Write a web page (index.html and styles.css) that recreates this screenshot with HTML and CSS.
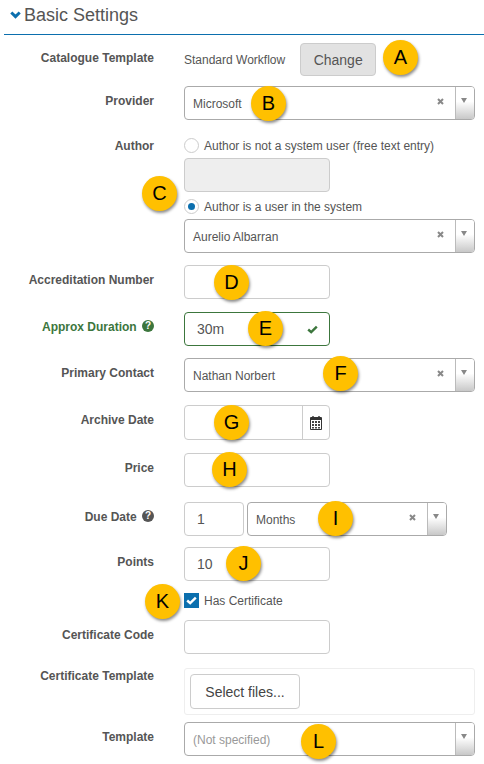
FILE: index.html
```html
<!DOCTYPE html><html><head><meta charset="utf-8">
<title>Basic Settings</title>
<link rel="stylesheet" href="styles.css">
</head><body>

<h2 class="section-title">
	<svg class="chevron" width="11" height="8" viewBox="0 0 11 8"><path d="M1.3 1.5 L5.5 5.6 L9.7 1.5" fill="none" stroke="#0b6fae" stroke-width="3"/></svg>
	Basic Settings
</h2>

<form class="settings">
	<div class="row row-first">
		<label>Catalogue Template</label>
		<div class="field inline-text">
			<span class="plain">Standard Workflow</span>
			<button type="button" class="btn-change">Change</button>
		</div>
	</div>

	<div class="row gap10">
		<label>Provider</label>
		<div class="combo"><span class="combo-value">Microsoft</span><svg class="combo-clear" width="7" height="7" viewBox="0 0 7 7"><path d="M1 1 L6 6 M6 1 L1 6" stroke="#888" stroke-width="2"/></svg><span class="combo-arrow"></span></div>
	</div>

	<div class="row gap18 row-author">
		<label>Author</label>
		<div class="field stack">
			<div class="choice"><span class="radio"></span>Author is not a system user (free text entry)</div>
			<div class="input input-disabled"></div>
			<div class="choice choice-second"><span class="radio radio-on"></span>Author is a user in the system</div>
			<div class="combo"><span class="combo-value">Aurelio Albarran</span><svg class="combo-clear" width="7" height="7" viewBox="0 0 7 7"><path d="M1 1 L6 6 M6 1 L1 6" stroke="#888" stroke-width="2"/></svg><span class="combo-arrow"></span></div>
		</div>
	</div>

	<div class="row gap12">
		<label>Accreditation Number</label>
		<div class="input"></div>
	</div>

	<div class="row gap13">
		<label class="label-ok">Approx Duration <span class="help help-ok">?</span></label>
		<div class="input input-ok">30m
			<svg class="tick" width="11" height="9" viewBox="0 0 11 9"><path d="M1.2 4.5 L4.2 7.2 L9.8 1.6" fill="none" stroke="#3c763d" stroke-width="2.4"/></svg>
		</div>
	</div>

	<div class="row gap12">
		<label>Primary Contact</label>
		<div class="combo"><span class="combo-value">Nathan Norbert</span><svg class="combo-clear" width="7" height="7" viewBox="0 0 7 7"><path d="M1 1 L6 6 M6 1 L1 6" stroke="#888" stroke-width="2"/></svg><span class="combo-arrow"></span></div>
	</div>

	<div class="row gap13">
		<label>Archive Date</label>
		<div class="input input-date">
			<span class="date-btn">
				<svg width="12" height="14" viewBox="0 0 12 14"><path d="M0.5 1.5 H11.5 V13.5 H0.5 Z" fill="#fff" stroke="#333"/><path d="M0 2 H12 V4 H0 Z" fill="#333"/><path d="M3 0 V2 M9 0 V2" stroke="#333" stroke-width="1.4"/><path d="M2 5 H4 V7 H2 Z M5 5 H7 V7 H5 Z M8 5 H10 V7 H8 Z M2 8 H4 V10 H2 Z M5 8 H7 V10 H5 Z M8 8 H10 V10 H8 Z M2 11 H4 V12.5 H2 Z M5 11 H7 V12.5 H5 Z M8 11 H10 V12.5 H8 Z" fill="#444"/></svg>
			</span>
		</div>
	</div>

	<div class="row gap13">
		<label>Price</label>
		<div class="input"></div>
	</div>

	<div class="row gap15">
		<label>Due Date <span class="help">?</span></label>
		<div class="field due">
			<div class="input input-small">1</div>
			<div class="combo combo-due"><span class="combo-value">Months</span><svg class="combo-clear" width="7" height="7" viewBox="0 0 7 7"><path d="M1 1 L6 6 M6 1 L1 6" stroke="#888" stroke-width="2"/></svg><span class="combo-arrow"></span></div>
		</div>
	</div>

	<div class="row gap11">
		<label>Points</label>
		<div class="input">10</div>
	</div>

	<div class="row gap12 row-check">
		<label></label>
		<div class="choice"><span class="checkbox"><svg width="11" height="9" viewBox="0 0 11 9"><path d="M1.2 4.5 L4.2 7.2 L9.8 1.6" fill="none" stroke="#fff" stroke-width="2.4"/></svg></span>Has Certificate</div>
	</div>

	<div class="row gap12">
		<label>Certificate Code</label>
		<div class="input"></div>
	</div>

	<div class="row gap14">
		<label class="label-file">Certificate Template</label>
		<div class="upload"><button type="button" class="btn-select">Select files...</button></div>
	</div>

	<div class="row gap7">
		<label>Template</label>
		<div class="combo"><span class="combo-value placeholder">(Not specified)</span><span class="combo-arrow"></span></div>
	</div>
</form>

<span class="badge badge-a">A</span>
<span class="badge badge-b">B</span>
<span class="badge badge-c">C</span>
<span class="badge badge-d">D</span>
<span class="badge badge-e">E</span>
<span class="badge badge-f">F</span>
<span class="badge badge-g">G</span>
<span class="badge badge-h">H</span>
<span class="badge badge-i">I</span>
<span class="badge badge-j">J</span>
<span class="badge badge-k">K</span>
<span class="badge badge-l">L</span>

</body></html>
```

FILE: styles.css
```css
body {
	margin: 0;
	position: relative;
	height: 764px;
	overflow: hidden;
	background: #fff;
	color: #555;
	font-family: "Liberation Sans", Arial, sans-serif;
	font-size: 12px;
}

.section-title {
	margin: 0 0 0 4px;
	border-bottom: 1px solid #0b6fae;
	display: flex;
	align-items: center;
	gap: 3px;
	padding: 0 0 4px 6px;
	box-sizing: border-box;
	height: 35px;
	font-size: 18px;
	font-weight: normal;
	color: #555;
}

.settings {
	padding-top: 8px;
}

.row {
	display: grid;
	grid-template-columns: 154px 1fr;
	column-gap: 30px;
	padding-right: 9px;
}
.gap7 { margin-top: 7px; }
.gap10 { margin-top: 10px; }
.gap11 { margin-top: 11px; }
.gap12 { margin-top: 12px; }
.gap13 { margin-top: 13px; }
.gap14 { margin-top: 14px; }
.gap15 { margin-top: 15px; }
.gap18 { margin-top: 18px; }

.row label {
	text-align: right;
	font-weight: bold;
	line-height: 14px;
	padding-top: 8px;
}
.row-author label { padding-top: 1px; }
.row label.label-file { padding-top: 1px; }
.row label.label-ok { color: #3c763d; }

.inline-text {
	display: flex;
	align-items: center;
	gap: 15px;
}

.btn-change {
	width: 76px;
	height: 33px;
	padding: 0;
	border: 1px solid #ccc;
	border-radius: 4px;
	background: #e2e2e2;
	color: #555;
	font: 14px "Liberation Sans", Arial, sans-serif;
}

.input {
	position: relative;
	box-sizing: border-box;
	width: 146px;
	height: 34px;
	padding-left: 12px;
	border: 1px solid #ccc;
	border-radius: 4px;
	background: #fff;
	font-size: 14px;
	line-height: 32px;
}
.input-disabled {
	background: #eee;
	margin-top: 5px;
}
.input-ok {
	border-color: #3c763d;
}
.tick {
	position: absolute;
	right: 11px;
	top: 12px;
}
.input-date {
	height: 35px;
}
.date-btn {
	position: absolute;
	right: 0;
	top: 0;
	bottom: 0;
	width: 26px;
	border-left: 1px solid #ccc;
	display: flex;
	align-items: center;
	justify-content: center;
}
.input-small {
	width: 60px;
}

.due {
	display: flex;
	gap: 3px;
}

.combo {
	box-sizing: border-box;
	display: flex;
	align-items: stretch;
	height: 34px;
	border: 1px solid #aaa;
	border-radius: 4px;
	background: #fff;
}
.combo-due {
	width: 200px;
}
.combo-value {
	flex: 1;
	padding-left: 8px;
	line-height: 34px;
	color: #555;
}
.combo-value.placeholder {
	color: #999;
}
.combo-clear {
	margin: 11px 11px 0 0;
}
.combo-arrow {
	position: relative;
	width: 18px;
	border-left: 1px solid #bbb;
	border-radius: 0 3px 3px 0;
	background: linear-gradient(#fff 45%, #c8c8c8);
}
.combo-arrow::after {
	content: "";
	position: absolute;
	left: 5px;
	top: 11px;
	border-left: 3px solid transparent;
	border-right: 3px solid transparent;
	border-top: 5px solid #888;
}

.choice {
	display: flex;
	align-items: center;
	gap: 5px;
	height: 15px;
}
.choice-second {
	margin-top: 7px;
	margin-bottom: 5px;
}
.radio {
	box-sizing: border-box;
	width: 15px;
	height: 15px;
	border: 1px solid #ccc;
	border-radius: 50%;
	background: #fff;
	display: flex;
	align-items: center;
	justify-content: center;
}
.radio-on::after {
	content: "";
	width: 7px;
	height: 7px;
	border-radius: 50%;
	background: #0b6fae;
}
.checkbox {
	width: 15px;
	height: 15px;
	background: #0b6fae;
	display: flex;
	align-items: center;
	justify-content: center;
}

.help {
	display: inline-block;
	width: 12px;
	height: 12px;
	margin-left: 2px;
	border-radius: 50%;
	background: #555;
	color: #fff;
	font-size: 10px;
	line-height: 12px;
	text-align: center;
	vertical-align: 2px;
}
.help-ok {
	background: #3c763d;
}

.upload {
	box-sizing: border-box;
	height: 47px;
	padding: 5px 5px;
	border: 1px solid #eee;
	border-radius: 3px;
}
.btn-select {
	width: 110px;
	height: 35px;
	padding: 0;
	border: 1px solid #ccc;
	border-radius: 4px;
	background: #fff;
	color: #444;
	font: 14px "Liberation Sans", Arial, sans-serif;
}

/* letter markers laid over the form */
.badge {
	position: absolute;
	width: 35px;
	height: 35px;
	border-radius: 50%;
	background: #ffc000;
	color: #000;
	font-size: 20px;
	line-height: 35px;
	text-align: center;
	box-shadow: 1px 2px 3px rgba(0, 0, 0, .45);
}
.badge-a { left: 383px; top: 40px; }
.badge-b { left: 251px; top: 86px; }
.badge-c { left: 142px; top: 176px; }
.badge-d { left: 214px; top: 265px; }
.badge-e { left: 248px; top: 311px; }
.badge-f { left: 323px; top: 356px; }
.badge-g { left: 214px; top: 405px; }
.badge-h { left: 212px; top: 452px; }
.badge-i { left: 318px; top: 501px; }
.badge-j { left: 226px; top: 546px; }
.badge-k { left: 145px; top: 584px; }
.badge-l { left: 301px; top: 724px; }
```
